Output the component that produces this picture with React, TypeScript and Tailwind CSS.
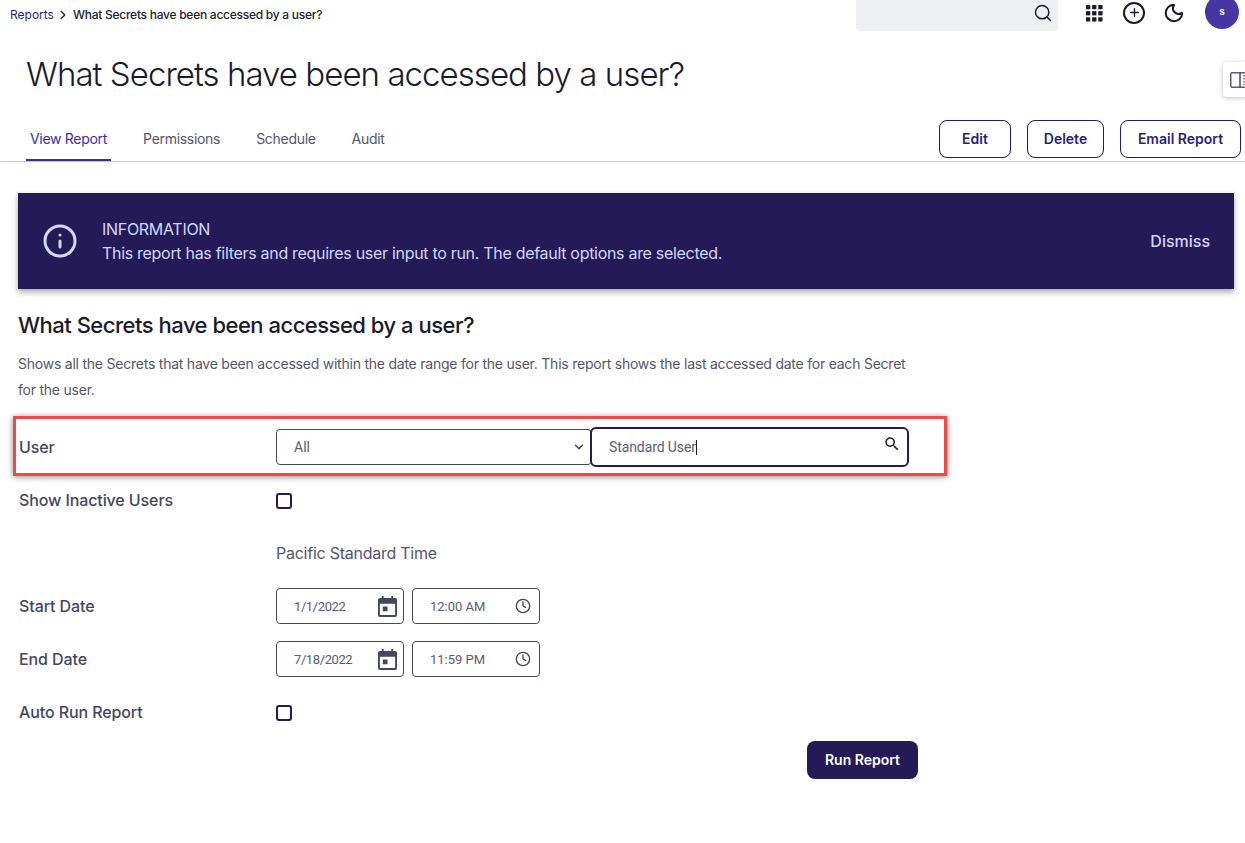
import React from "react";
import { Search, Plus, Moon, ChevronRight, ChevronDown, Info, Clock } from "lucide-react";

const sans = "font-['Inter','Noto_Sans',sans-serif]";

function Waffle() {
  return (
    <svg width="17" height="17" viewBox="0 0 18 18" fill="#1b1a2b">
      {[0, 6.5, 13].map((y) =>
        [0, 6.5, 13].map((x) => <rect key={`${x}-${y}`} x={x} y={y} width="4.5" height="4.5" />)
      )}
    </svg>
  );
}

function CalendarIcon() {
  return (
    <svg width="19" height="21" viewBox="0 0 20 22" fill="#45465f" className="mt-[2px]">
      <path d="M4 0h2v2h8V0h2v2h2a2 2 0 0 1 2 2v16a2 2 0 0 1-2 2H2a2 2 0 0 1-2-2V4a2 2 0 0 1 2-2h2V0zM2 8v12h16V8H2z" />
      <rect x="5" y="11" width="5" height="5" />
    </svg>
  );
}

function MaterialSearch() {
  return (
    <svg width="18" height="18" viewBox="0 0 24 24" fill="#1b1a2b">
      <path d="M15.5 14h-.79l-.28-.27A6.47 6.47 0 0 0 16 9.5 6.5 6.5 0 1 0 9.5 16c1.61 0 3.09-.59 4.23-1.57l.27.28v.79l5 4.99L20.49 19l-4.99-5zm-6 0C7.01 14 5 11.99 5 9.5S7.01 5 9.5 5 14 7.01 14 9.5 11.99 14 9.5 14z" />
    </svg>
  );
}

function Checkbox() {
  return <div className="w-4 h-4 mt-[2px] rounded-[3px] border-2 border-[#241a5c] bg-white" />;
}

function Row({ label, children }: { label?: string; children: React.ReactNode }) {
  return (
    <div className="h-[53px] flex items-center">
      <div className="w-[258px] pl-px text-[16px] tracking-[-0.1px] font-medium text-[#45465f]">{label}</div>
      {children}
    </div>
  );
}

function DateTime({ date, time }: { date: string; time: string }) {
  const field = "h-9 w-32 rounded border border-[#45465f] flex items-center justify-between font-['Roboto',sans-serif] text-[13px] text-[#5c5d74]";
  return (
    <div className="flex gap-2">
      <div className={`${field} pl-[17px] pr-[6px]`}>
        <span className="tracking-[-0.4px] pt-[2px]">{date}</span>
        <CalendarIcon />
      </div>
      <div className={`${field} pl-[17px] pr-[8px]`}>
        <span className="pt-[2px]">{time}</span>
        <Clock size={16} strokeWidth={2} color="#45465f" />
      </div>
    </div>
  );
}

function OutlineButton({ children, w }: { children: React.ReactNode; w: string }) {
  return (
    <button className={`${w} h-[38px] pb-[2px] rounded-lg border border-[#241a6c] bg-white text-[14px] font-semibold text-[#2a1f78]`}>
      {children}
    </button>
  );
}

export default function App() {
  return (
    <div className={`${sans} relative w-[1245px] h-[843px] overflow-hidden bg-white`}>
      <header className="h-[31px] flex">
        <nav className="flex items-center pl-[10px] text-[12px] tracking-[-0.26px] text-[#22212f] h-[30px] flex-1">
          <span className="text-[#2a1f78] tracking-normal">Reports</span>
          <ChevronRight size={14} strokeWidth={2.5} className="ml-[2px] mr-[3px]" />
          <span className="font-medium">What Secrets have been accessed by a user?</span>
        </nav>
        <div className="w-[202px] h-[31px] bg-[#eeeff2] rounded-b flex items-start justify-end pt-[3px] pr-[5px]">
          <Search size={20} strokeWidth={1.8} color="#1b1a2b" />
        </div>
        <div className="w-[187px] h-[25px] flex items-center pl-[28px]">
          <div className="mt-[1px]">
            <Waffle />
          </div>
          <div className="ml-[20px] w-[22px] h-[22px] rounded-full border-2 border-[#1b1a2b] flex items-center justify-center">
            <Plus size={13} strokeWidth={2.5} color="#1b1a2b" />
          </div>
          <Moon size={22} strokeWidth={2.2} color="#1b1a2b" className="ml-[18px]" />
          <div className="ml-[20px] w-[34px] h-[34px] -mt-[2px] rounded-full bg-[#4536a4] flex items-center justify-center text-white text-[10px] font-semibold">
            s
          </div>
        </div>
      </header>

      <h1 className="pl-[26px] mt-[19px] h-[48px] leading-[48px] text-[33px] tracking-[-0.95px] font-light text-[#1b1a2b]">
        What Secrets have been accessed by a user?
      </h1>

      <div className="mt-[22px] h-[42px] border-b border-[#c4c4c8] flex justify-between pr-[4px]">
        <div className="flex pl-[26px] text-[14px] tracking-[-0.3px]">
          <div className="h-[41px] pb-[3px] px-1 border-b-2 border-[#3e2ea6] text-[#3e2ea6] flex items-center">View Report</div>
          <div className="ml-[32px] h-[37px] flex items-center text-[#55566b]">Permissions</div>
          <div className="ml-9 h-[37px] flex items-center text-[#55566b]">Schedule</div>
          <div className="ml-9 h-[37px] flex items-center text-[#55566b]">Audit</div>
        </div>
        <div className="flex gap-4 items-start">
          <OutlineButton w="w-[72px]">Edit</OutlineButton>
          <OutlineButton w="w-[77px]">Delete</OutlineButton>
          <OutlineButton w="w-[121px]">Email Report</OutlineButton>
        </div>
      </div>

      <div className="px-[18px]">
        <section className="mt-[31px] w-[1216px] h-[96px] bg-[#241a58] shadow-[0_3px_6px_rgba(0,0,0,0.35)] flex items-center text-[#d3d6f7] pl-[24px] pr-[24px]">
          <Info size={36} strokeWidth={2} />
          <div className="ml-[24px] flex-1 text-[16px] tracking-[-0.3px] leading-[24px]">
            <div>INFORMATION</div>
            <div>This report has filters and requires user input to run. The default options are selected.</div>
          </div>
          <span className="text-[16px] font-medium">Dismiss</span>
        </section>

        <h2 className="mt-[21px] text-[22px] tracking-[-0.5px] leading-[30px] font-medium text-[#1b1a2b]">
          What Secrets have been accessed by a user?
        </h2>
        <p className="mt-[11px] w-[900px] text-[14px] tracking-[-0.23px] leading-[26px] text-[#55566b]">
          Shows all the Secrets that have been accessed within the date range for the user. This report shows the last accessed date for each Secret for the user.
        </p>

        <div className="mt-[17px]">
          <Row label="User">
            <div className="flex items-center">
              <div className="w-[316px] h-9 rounded border border-[#45465f] flex items-center justify-between pl-[17px] pr-[5px] font-['Roboto',sans-serif] text-[14px] text-[#5c5d74]">
                <span className="pt-[2px]">All</span>
                <ChevronDown size={14} strokeWidth={2.5} color="#45465f" />
              </div>
              <div className="-ml-[2px] w-[319px] h-[40px] rounded-md border-2 border-[#241a58] bg-white flex items-start justify-between pl-[17px] pr-[6px] font-['Roboto',sans-serif] text-[14px] tracking-[-0.1px] text-[#5c5d74] relative z-10">
                <span className="h-full flex items-center pt-[1px]">
                  Standard User<span className="w-px h-[15px] bg-[#1b1a2b]" />
                </span>
                <div className="mt-[6px]">
                  <MaterialSearch />
                </div>
              </div>
            </div>
          </Row>
          <Row label="Show Inactive Users">
            <Checkbox />
          </Row>
          <Row>
            <span className="text-[16px] tracking-[-0.25px] text-[#55566b]">Pacific Standard Time</span>
          </Row>
          <Row label="Start Date">
            <DateTime date="1/1/2022" time="12:00 AM" />
          </Row>
          <Row label="End Date">
            <DateTime date="7/18/2022" time="11:59 PM" />
          </Row>
          <Row label="Auto Run Report">
            <Checkbox />
          </Row>
        </div>

        <div className="w-[900px] flex justify-end mt-[3px]">
          <button className="w-[111px] h-[38px] pb-[2px] rounded-lg bg-[#241a58] text-white text-[14px] font-semibold">Run Report</button>
        </div>
      </div>

      <div className="absolute left-[13px] top-[416px] w-[934px] h-[60px] border-[3px] border-[#f44848] shadow-[0_1px_6px_rgba(0,0,0,0.45)] pointer-events-none z-20" />

      <div className="absolute right-0 top-[62px] w-[22px] h-[35px] bg-white rounded-l shadow-[0_1px_4px_rgba(0,0,0,0.25)] flex items-center pl-[7px] overflow-hidden">
        <svg width="20" height="16" viewBox="0 0 20 16" fill="none" className="shrink-0">
          <rect x="0.75" y="0.75" width="18" height="14.5" rx="1.5" stroke="#5a5b85" strokeWidth="1.5" />
          <path d="M10 0.75V15.25" stroke="#45465f" strokeWidth="1.5" />
          <path d="M14 3v10" stroke="#45465f" strokeWidth="1.2" strokeDasharray="1.5 1.5" />
        </svg>
      </div>
    </div>
  );
}
